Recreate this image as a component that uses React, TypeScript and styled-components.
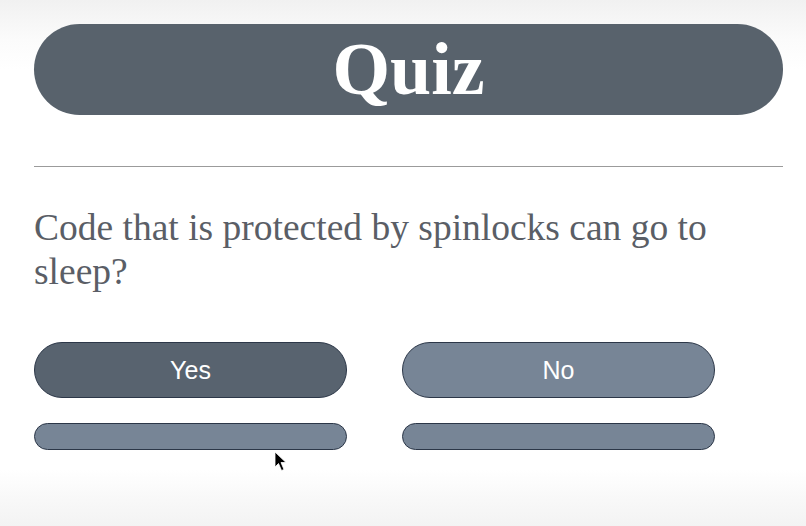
import React from "react";
import styled, { createGlobalStyle } from "styled-components";

const Global = createGlobalStyle`
  html, body { margin: 0; padding: 0; }
  body {
    width: 806px;
    height: 526px;
    overflow: hidden;
    background: linear-gradient(to bottom, #f1f1f1 0px, #fbfbfb 40px, #ffffff 70px, #ffffff 470px, #f8f8f8 500px, #f3f3f3 526px);
  }
`;

const Page = styled.main`
  position: relative;
  box-sizing: border-box;
  width: 806px;
  height: 526px;
  padding: 24px 23px 0 34px;
  display: flex;
  flex-direction: column;
`;

const Header = styled.h1`
  margin: 0;
  height: 91px;
  border-radius: 46px;
  background: #58626c;
  color: #ffffff;
  font-family: "Liberation Serif", "Times New Roman", serif;
  font-weight: 700;
  font-size: 74px;
  line-height: 91px;
  text-align: center;
`;

const Rule = styled.hr`
  margin: 51px 0 0 0;
  border: none;
  height: 1px;
  background: #9b9b9b;
`;

const Question = styled.p`
  margin: 39px 0 0 0;
  font-family: "Liberation Serif", "Times New Roman", serif;
  font-size: 37.5px;
  line-height: 44px;
  color: #5a5e66;
`;

const Answers = styled.div`
  margin-top: 48px;
  display: grid;
  grid-template-columns: 313px 313px;
  column-gap: 55px;
  row-gap: 25px;
`;

const Answer = styled.button<{ $active?: boolean; $thin?: boolean }>`
  box-sizing: border-box;
  height: ${(p) => (p.$thin ? "27px" : "56px")};
  border-radius: 28px;
  border: 1px solid #2c3748;
  background: ${(p) => (p.$active ? "#58636f" : "#778596")};
  color: #ffffff;
  font-family: "Liberation Sans", Arial, sans-serif;
  font-size: 25px;
  padding: 0;
  cursor: pointer;
`;

const Cursor = styled.svg`
  position: absolute;
  left: 274px;
  top: 451px;
`;

export default function App() {
  return (
    <>
      <Global />
      <Page>
        <Header>Quiz</Header>
        <Rule />
        <Question>Code that is protected by spinlocks can go to sleep?</Question>
        <Answers>
          <Answer $active>Yes</Answer>
          <Answer>No</Answer>
          <Answer $thin aria-label="empty answer" />
          <Answer $thin aria-label="empty answer" />
        </Answers>
        <Cursor width="16" height="22" viewBox="0 0 16 22">
          <path d="M1 1 L1 16 L4.5 12.5 L7.5 19.5 L10 18.5 L7 11.5 L12 11.5 Z" fill="#000" stroke="#fff" strokeWidth="0.8" />
        </Cursor>
      </Page>
    </>
  );
}
